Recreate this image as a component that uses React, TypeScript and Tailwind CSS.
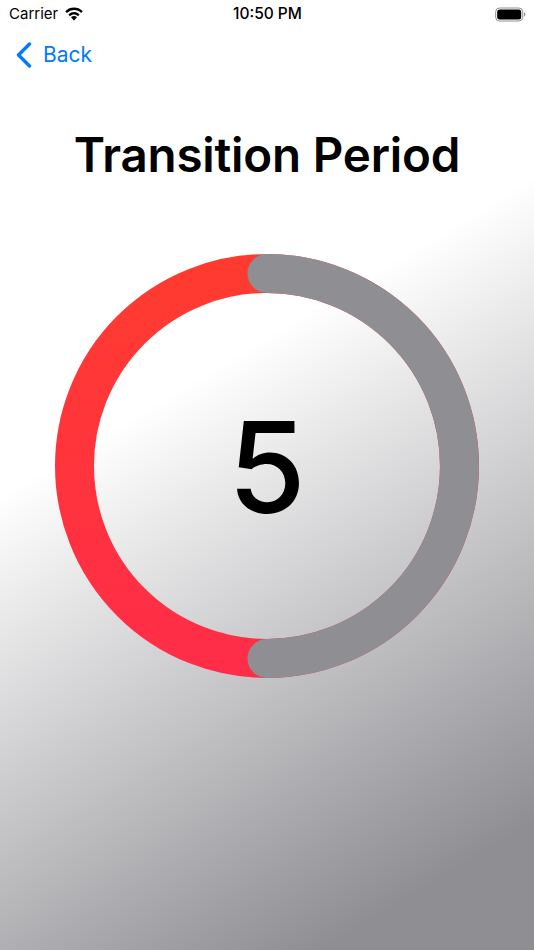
const SF = "font-['Inter','Liberation_Sans',sans-serif]"

function WifiIcon() {
  return (
    <svg width="20" height="15" viewBox="0 0 20 15" fill="#000">
      <path d="M10 3.100c2.700 0 5.200 1 7.100 2.800l1.400-1.500a.4.4 0 0 0 0-.5A12.300 12.300 0 0 0 10 .5 12.300 12.300 0 0 0 1.500 3.900a.4.4 0 0 0 0 .5l1.400 1.500A10.300 10.300 0 0 1 10 3.100z" />
      <path d="M10 7.600c1.500 0 2.900.6 4 1.600l1.400-1.500a.4.4 0 0 0 0-.5A8 8 0 0 0 10 5a8 8 0 0 0-5.400 2.200.4.4 0 0 0 0 .5L6 9.200c1.100-1 2.500-1.600 4-1.600z" />
      <path d="M12.800 10.600a.4.4 0 0 0 0-.5A4.200 4.200 0 0 0 10 9a4.200 4.200 0 0 0-2.800 1.100.4.4 0 0 0 0 .5l2.500 2.700a.4.4 0 0 0 .6 0z" />
    </svg>
  )
}

function BatteryIcon() {
  return (
    <svg width="31" height="15" viewBox="0 0 31 15">
      <rect x="0.7" y="1" width="27" height="13" rx="3.8" fill="none" stroke="#8e8e93" strokeWidth="1" />
      <rect x="2.2" y="2.5" width="24" height="10" rx="2.5" fill="#000" />
      <path d="M29 5.500c.9.300 1.400 1.100 1.400 2s-.5 1.700-1.400 2z" fill="#8e8e93" />
    </svg>
  )
}

function BackChevron() {
  return (
    <svg width="16" height="26" viewBox="0 0 16 26" fill="none" stroke="#007aff" strokeWidth="3.4" strokeLinecap="round" strokeLinejoin="round">
      <path d="M13.500 2 2.500 13l11 11" />
    </svg>
  )
}

function Ring() {
  return (
    <svg width="424" height="424" viewBox="0 0 424 424" className="col-start-1 row-start-1">
      <defs>
        <linearGradient id="red" x1="0" y1="0" x2="0" y2="1">
          <stop offset="0" stopColor="#ff3b30" />
          <stop offset="1" stopColor="#ff2d48" />
        </linearGradient>
      </defs>
      <circle cx="212" cy="212" r="192.500" fill="none" stroke="url(#red)" strokeWidth="39" />
      <path
        d="M212 19.500a192.500 192.500 0 0 1 0 385"
        fill="none"
        stroke="#8e8e93"
        strokeWidth="39"
        strokeLinecap="round"
      />
    </svg>
  )
}

export default function App() {
  return (
    <div className={`${SF} flex h-[950px] w-[534px] flex-col overflow-hidden bg-[linear-gradient(149deg,#ffffff_39%,#8e8e93_90%)] text-black`}>
      {/* status bar */}
      <div className="flex h-[27px] items-center justify-between pl-[9px] pr-[8px] pt-[1px] text-[15px]">
        <div className="flex w-[100px] items-center gap-[6px]">
          <span>Carrier</span>
          <WifiIcon />
        </div>
        <span className="text-[15.5px] font-medium">10:50 PM</span>
        <div className="flex w-[100px] justify-end">
          <BatteryIcon />
        </div>
      </div>

      {/* nav */}
      <div className="mt-[9px] flex h-[36px] items-center pl-[16px] pt-[1px] text-[21px] text-[#007aff]">
        <BackChevron />
        <span className="ml-[11px]">Back</span>
      </div>

      {/* title */}
      <h1 className="mt-[55px] text-center text-[47.5px] font-semibold leading-[56px] tracking-[-0.2px]">Transition Period</h1>

      {/* timer ring */}
      <div className="mt-[71px] grid justify-center">
        <Ring />
        <div className="col-start-1 row-start-1 flex items-center justify-center pt-[2px] text-[126px] font-[540] leading-none">
          5
        </div>
      </div>
    </div>
  )
}
